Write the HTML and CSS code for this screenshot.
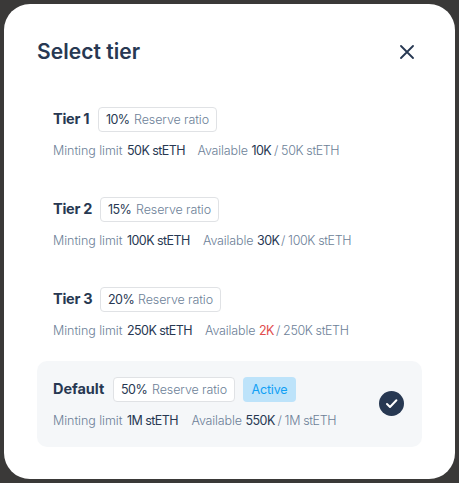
FILE: index.html
```html
<!DOCTYPE html>
<html lang="en">
<head>
<meta charset="utf-8">
<title>Select tier</title>
<link rel="stylesheet" href="styles.css">
</head>
<body>
<main class="modal">
  <header class="head">
    <h1>Select tier</h1>
    <svg class="close" viewBox="0 0 14 14"><path d="M1 1 13 13M13 1 1 13"/></svg>
  </header>
  <section class="tiers">
    <article class="tier">
      <div class="info">
        <div class="top"><h2 class="n1">Tier 1</h2><div class="badge b1"><b>10%</b><span>Reserve ratio</span></div></div>
        <div class="stats"><span class="label">Minting limit</span><b class="limit l1">50K stETH</b><span class="avail">Available</span><b class="v1">10K</b><span class="total t1">/ 50K stETH</span></div>
      </div>
    </article>
    <article class="tier">
      <div class="info">
        <div class="top"><h2 class="n2">Tier 2</h2><div class="badge b2"><b>15%</b><span>Reserve ratio</span></div></div>
        <div class="stats"><span class="label">Minting limit</span><b class="limit l2">100K stETH</b><span class="avail">Available</span><b class="v2">30K</b><span class="total t2">/ 100K stETH</span></div>
      </div>
    </article>
    <article class="tier">
      <div class="info">
        <div class="top"><h2 class="n3">Tier 3</h2><div class="badge b3"><b>20%</b><span>Reserve ratio</span></div></div>
        <div class="stats"><span class="label">Minting limit</span><b class="limit l3">250K stETH</b><span class="avail">Available</span><b class="v3 low">2K</b><span class="total t3">/ 250K stETH</span></div>
      </div>
    </article>
    <article class="tier selected">
      <div class="info">
        <div class="top"><h2 class="n4">Default</h2><div class="badge b4"><b>50%</b><span>Reserve ratio</span></div><div class="active">Active</div></div>
        <div class="stats"><span class="label">Minting limit</span><b class="limit l4">1M stETH</b><span class="avail">Available</span><b class="v4">550K</b><span class="total t4">/ 1M stETH</span></div>
      </div>
      <svg class="check" viewBox="0 0 25 25"><circle cx="12.5" cy="12.5" r="12.5"/><path d="m8 13 3 3 6.4-6.7"/></svg>
    </article>
  </section>
</main>
</body>
</html>
```
FILE: styles.css
```css
* { box-sizing: border-box; }
body {
  margin: 0;
  height: 483px;
  padding: 4px;
  background: #3a3938;
  font-family: Inter, sans-serif;
  color: #273852;
  overflow: hidden;
}
.modal {
  width: 450.5px;
  height: 475px;
  border-radius: 26px;
  background: #fff;
  padding: 32px 32.5px 32px 33px;
}
.head {
  display: flex;
  align-items: center;
  justify-content: space-between;
  height: 32px;
  padding-right: 8px;
}
h1 {
  margin: 0;
  font-size: 21px;
  line-height: 32px;
  font-weight: 600;
  letter-spacing: 0.05px;
}
.close { width: 14px; height: 14px; margin-top: -1px; fill: none; stroke: #273852; stroke-width: 1.8; stroke-linecap: round; }
.tiers { display: grid; gap: 4px; margin-top: 23px; }
.tier {
  height: 86px;
  padding: 16px 18px 0 16px;
  border-radius: 10px;
  display: flex;
  justify-content: space-between;
}
.selected { background: #f5f7f9; }
.top { display: flex; height: 24px; align-items: center; }
h2 { margin: 0; font-size: 14.5px; line-height: 24px; font-weight: 700; white-space: nowrap; letter-spacing: -0.25px; }
.n1 { width: 45px; }
.n2, .n3 { width: 47px; }
.n4 { width: 60px; letter-spacing: -0.05px; }
b { font-weight: 400; color: #273852; }
.badge, .active { height: 25px; border-radius: 4px; font-size: 12.5px; white-space: nowrap; flex: none; }
.badge {
  display: flex;
  width: 119px;
  border: 1px solid #e0e2e5;
  background: #fff;
  padding-left: 7px;
  line-height: 24px;
  color: #6d7f98;
  letter-spacing: -0.55px;
}
.badge b { width: 28px; }
.badge span { font-weight: 300; letter-spacing: -0.1px; }
.b3, .b4 { width: 121px; }
.b3 b { width: 30px; }
.b4 { width: 122px; }
.b4 b { width: 31px; }
.active { width: 53px; margin-left: 8px; line-height: 26px; text-align: center; background: #bde3fa; color: #10a0f5; letter-spacing: -0.2px; }
.stats { display: flex; margin-top: 10px; height: 20px; font-size: 12.5px; line-height: 20px; color: #6d7f98; white-space: nowrap; letter-spacing: -0.55px; }
.stats span { font-weight: 300; }
.stats .label { width: 74px; letter-spacing: -0.05px; }
.stats .avail { width: 54px; letter-spacing: -0.15px; }
.stats .total { letter-spacing: -0.38px; }
.l1 { width: 70.5px; }
.l2 { width: 76px; }
.l3 { width: 78px; }
.l4 { width: 64.5px; }
.v1 { width: 22.5px; }
.v2 { width: 24px; }
.v3 { width: 17px; }
.v4 { width: 32px; }
.stats .low { color: #e14d4d; }
.check { width: 25px; height: 25px; margin-top: 14px; flex: none; }
.check circle { fill: #273852; }
.check path { fill: none; stroke: #fff; stroke-width: 2; stroke-linecap: round; stroke-linejoin: round; }
```
